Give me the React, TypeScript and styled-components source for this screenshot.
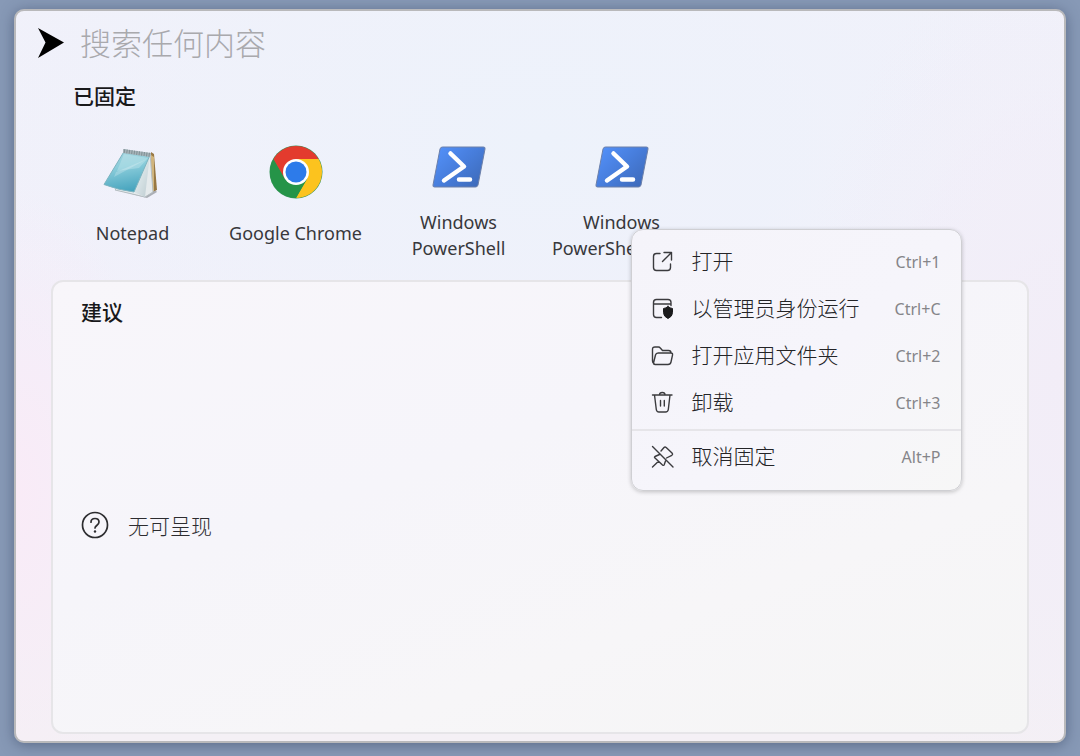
import React from "react";
import styled, { createGlobalStyle } from "styled-components";

const GlobalStyle = createGlobalStyle`
  *, *::before, *::after { box-sizing: border-box; }
  html, body { margin: 0; }
  body {
    background: #8799b6;
    color: #1f1f22;
    font-family: "Noto Sans", "Noto Sans CJK SC", sans-serif;
    font-size: 20px;
  }
  button, input { font: inherit; color: inherit; }
`;

const Desktop = styled.div`
  display: flex;
  min-height: 100vh;
  padding: 9px 14px 13px;
  background: #8799b6;
`;

const Launcher = styled.main`
  flex: 1;
  min-width: 0;
  display: flex;
  flex-direction: column;
  padding: 0 35px 7px;
  border: 2px solid #b9b9bb;
  border-radius: 10px;
  background:
    radial-gradient(ellipse 14% 42% at 0% 66%, #f9ebf7 0%, rgba(249, 235, 247, 0) 100%),
    radial-gradient(ellipse 26% 60% at 100% 50%, #f2edf7 0%, rgba(242, 237, 247, 0) 100%),
    radial-gradient(ellipse 60% 50% at 50% 18%, #edf2fb 0%, rgba(237, 242, 251, 0) 100%),
    linear-gradient(180deg, #f1f1fa 0%, #f2f0fa 50%, #f4f0f5 100%);
  box-shadow: 0 2px 14px rgba(45, 60, 90, 0.5);
`;

const SearchBar = styled.form`
  display: flex;
  align-items: center;
  gap: 15px;
  height: 64px;
  margin-left: -14px;
`;

const SearchInput = styled.input`
  flex: 1;
  min-width: 0;
  height: 48px;
  padding: 0 0 4px;
  border: 0;
  outline: 0;
  background: transparent;
  font-family: "Noto Sans CJK SC", sans-serif;
  font-size: 31px;
  font-weight: 300;
  &::placeholder { color: #a9a9ad; opacity: 1; }
`;

const Heading = styled.h2`
  margin: 0;
  font-size: 21px;
  line-height: 28px;
  font-weight: 500;
  font-family: "Noto Sans CJK SC", sans-serif;
  color: #19191b;
`;

const Pinned = styled.section`
  padding-top: 6px;
  ${Heading} { margin-left: 22px; }
`;

const AppGrid = styled.ul`
  display: grid;
  grid-template-columns: repeat(6, minmax(0, 1fr));
  height: 171px;
  margin: 0;
  padding: 0;
  list-style: none;
`;

const AppCell = styled.li`
  position: relative;
  display: flex;
`;

const AppTile = styled.button`
  flex: 1;
  display: flex;
  flex-direction: column;
  align-items: center;
  justify-content: center;
  gap: 21px;
  padding: 2px 4px 0;
  border: 0;
  background: transparent;
  font-size: 18px;
  line-height: 26px;
  color: #38383b;
  svg { display: block; flex: none; }
`;

const Menu = styled.div`
  position: absolute;
  z-index: 2;
  top: 120px;
  left: calc(50% + 9px);
  width: 331px;
  padding: 8px 0 10px;
  border: 1px solid #cfcfd3;
  border-radius: 12px;
  background: linear-gradient(135deg, #f5f4fa 0%, #f6f5fb 55%, #f7f7f7 100%);
  box-shadow: 0 1px 4px rgba(0, 0, 0, 0.22);
`;

const MenuItem = styled.button`
  display: flex;
  align-items: center;
  width: 100%;
  height: 47px;
  padding: 0 20px 0 19px;
  border: 0;
  background: transparent;
  font-size: 21px;
  font-weight: 300;
  font-family: "Noto Sans CJK SC", sans-serif;
  color: #242427;
  text-align: left;
  svg { flex: none; margin-right: 17px; }
`;

const MenuLabel = styled.span`
  padding-bottom: 3px;
`;

const Shortcut = styled.kbd`
  margin-left: auto;
  font-family: "Noto Sans", sans-serif;
  font-size: 16px;
  font-weight: 400;
  color: #858589;
`;

const Divider = styled.hr`
  height: 2px;
  margin: 3px 0 2px;
  border: 0;
  background: #e6e5e9;
`;

const Suggestions = styled.section`
  flex: 1;
  display: flex;
  flex-direction: column;
  padding: 15px 28px;
  border: 2px solid #e6e5e8;
  border-radius: 12px;
  background: linear-gradient(160deg, #f8f6fa 0%, #f6f5fa 40%, #f7f6f8 70%, #f5f5f5 100%);
`;

const Empty = styled.p`
  flex: 1;
  display: flex;
  align-items: center;
  gap: 19px;
  margin: 8px 0 0;
  font-size: 21px;
  line-height: 30px;
  font-weight: 300;
  font-family: "Noto Sans CJK SC", sans-serif;
  color: #2c2c2f;
`;

const ArrowLogo = () => (
  <svg width="28" height="32" viewBox="0 0 28 32" aria-hidden="true">
    <path d="M1 1 27 15.500 1 31 8.500 15.500Z" fill="#000" />
  </svg>
);

const NotepadIcon = () => (
  <svg width="56" height="54" viewBox="2 -2 56 54" aria-hidden="true" overflow="visible">
    <defs>
      <linearGradient id="page" x1="0.3" y1="0" x2="0.5" y2="1">
        <stop offset="0" stopColor="#a3d3de" />
        <stop offset="0.4" stopColor="#8bcddb" />
        <stop offset="1" stopColor="#45a3bd" />
      </linearGradient>
      <linearGradient id="edge" x1="0" y1="0" x2="1" y2="1">
        <stop offset="0" stopColor="#f3fafb" />
        <stop offset="1" stopColor="#bccbd0" />
      </linearGradient>
    </defs>
    <path d="M13 43 44 51 54 45 48 38Z" fill="#858b91" opacity="0.65" />
    <path d="M48 5 51 7 54 43 49 45Z" fill="#987843" />
    <path d="M48 8 51 10 51 44 48 45Z" fill="#d0b47c" />
    <path d="M47 6 50 45 42 50 12 43Z" fill="#e5eaec" stroke="#b4bdc1" strokeWidth="1" />
    <path d="M47 7 42 50 31 45Z" fill="url(#edge)" />
    <path d="M22 3 47 8 31 45Q15 43 1 37.500Z" fill="url(#page)" stroke="#7db4c0" strokeWidth="1" />
    <path d="M21 7 45 11 36 21 14 24Z" fill="#d8f0f4" opacity="0.32" />
    <path d="M44 12 13 25 11 30Z" fill="#fff" opacity="0.22" />
    <path d="M20 2 48 6 47 10 20 6Z" fill="#a6b3b8" />
    <path d="M21 4 48 8" stroke="#819196" strokeWidth="4" strokeDasharray="1 1.500" />
  </svg>
);

const ChromeIcon = () => (
  <svg width="54" height="54" viewBox="0 0 54 54" aria-hidden="true">
    <circle cx="27" cy="27" r="26.500" fill="#36955a" />
    <path d="M27 27 4.480 14A26 26 0 0 1 49.520 14Z" fill="#e33b2e" />
    <path d="M27 14H49.520A26 26 0 0 1 27 53L38.260 33.500Z" fill="#fcc31e" />
    <path d="M4.480 14A26 26 0 0 0 27 53L38.260 33.500 27 38 15.740 33.500Z" fill="#259448" />
    <path d="M4.480 14 15.740 33.500 27 27 27 14Z" fill="#e33b2e" />
    <circle cx="27" cy="27" r="13" fill="#fff" />
    <circle cx="27" cy="27" r="10.500" fill="#2d7bea" />
  </svg>
);

const PowerShellIcon = ({ id }: { id: string }) => (
  <svg width="54" height="58" viewBox="0 -16 54 58" aria-hidden="true">
    <defs>
      <linearGradient id={id} x1="0" y1="0.1" x2="1" y2="0.9">
        <stop offset="0" stopColor="#5391fa" />
        <stop offset="0.5" stopColor="#477ddb" />
        <stop offset="1" stopColor="#3d69b7" />
      </linearGradient>
    </defs>
    <path
      d="M10.500 1H51.500Q53.500 1 53 3L46 39Q45.500 41 43.500 41H2.500Q.5 41 1 39L8 3Q8.500 1 10.500 1Z"
      fill={`url(#${id})`}
      stroke="#6c80aa"
      strokeWidth="1"
    />
    <path d="M18.500 7.500 32 20.500 12 34.500M27 33.500H38" fill="none" stroke="#fff" strokeWidth="4.500" strokeLinecap="round" strokeLinejoin="round" />
  </svg>
);

const LineIcon = ({ children }: { children: React.ReactNode }) => (
  <svg width="24" height="24" viewBox="0 0 24 24" fill="none" stroke="#3b3b3e" strokeWidth="1.4" strokeLinejoin="round" strokeLinecap="round" aria-hidden="true">
    {children}
  </svg>
);

const OpenIcon = () => (
  <LineIcon>
    <path d="M9 3.500H5.500Q2.500 3.500 2.500 6.500V17.500Q2.500 20.500 5.500 20.500H16.500Q19.500 20.500 19.500 17.500V14M13 2.500H20.500V10M20.500 2.500 11.500 11.500" />
  </LineIcon>
);

const AdminIcon = () => (
  <LineIcon>
    <path d="M10.500 20.500H5.500Q2.500 20.500 2.500 17.500V5.500Q2.500 2.500 5.500 2.500H17Q20 2.500 20 5.500V8.500M2.500 7H20" />
    <path d="M17 9.500Q19 11.300 21.500 11.500V15.500Q21.500 19.500 17 21.500 12.500 19.500 12.500 15.500V11.500Q15 11.300 17 9.500Z" fill="#1b1b1d" stroke="#1b1b1d" strokeWidth="1" />
  </LineIcon>
);

const FolderIcon = () => (
  <LineIcon>
    <path d="M3 19.500Q1.500 19 1.500 17V5.500Q1.500 3 4 3H7.500Q8.500 3 9.300 4L11.500 6.500H17.500Q20 6.500 20 9M2.500 19 4.500 11Q5 9 7.200 9H19.800Q22 9 21.500 11.200L20 18Q19.500 20.500 17 20.500H4Q2.500 20.500 2.500 19Z" />
  </LineIcon>
);

const TrashIcon = () => (
  <LineIcon>
    <path d="M1.500 4H21M8.500 4Q8.500 1.500 11.300 1.500T14 4M3.500 4 5.300 18.500Q5.600 21 8 21H14.500Q17 21 17.300 18.500L19 4M9.500 9.500V15M13.300 9.500V15" />
  </LineIcon>
);

const UnpinIcon = () => (
  <LineIcon>
    <path d="M1.500 1.500 22 22M1.500 22 7.500 16.200M10 6 13 2.500Q14 1.500 15.200 2.500L21 8Q22.200 9.300 20.800 10.300L15.500 13M8.500 9.500 4 11.500Q3 12.200 4 13L11.500 20Q12.500 20.800 13.200 19.800L14.500 16" />
  </LineIcon>
);

const HelpIcon = () => (
  <svg width="28" height="28" viewBox="0 0 28 28" fill="none" stroke="#2c2c2f" strokeWidth="1.700" strokeLinecap="round" aria-hidden="true">
    <circle cx="14" cy="14" r="12.500" />
    <path d="M10 11.200Q10 7.500 14 7.500T18 11Q18 12.700 16 14.200T14 17" />
    <circle cx="14" cy="20.500" r="1.200" fill="#2c2c2f" stroke="none" />
  </svg>
);

const commands = [
  { label: "打开", keys: "Ctrl+1", Icon: OpenIcon },
  { label: "以管理员身份运行", keys: "Ctrl+C", Icon: AdminIcon },
  { label: "打开应用文件夹", keys: "Ctrl+2", Icon: FolderIcon },
  { label: "卸载", keys: "Ctrl+3", Icon: TrashIcon },
];

const ContextMenu = () => (
  <Menu role="menu">
    {commands.map(({ label, keys, Icon }) => (
      <MenuItem key={label} type="button" role="menuitem">
        <Icon />
        <MenuLabel>{label}</MenuLabel>
        <Shortcut>{keys}</Shortcut>
      </MenuItem>
    ))}
    <Divider />
    <MenuItem type="button" role="menuitem">
      <UnpinIcon />
      <MenuLabel>取消固定</MenuLabel>
      <Shortcut>Alt+P</Shortcut>
    </MenuItem>
  </Menu>
);

export default function App() {
  return (
    <>
      <GlobalStyle />
      <Desktop>
        <Launcher>
          <SearchBar role="search" onSubmit={(e) => e.preventDefault()}>
            <ArrowLogo />
            <SearchInput type="text" aria-label="搜索任何内容" placeholder="搜索任何内容" />
          </SearchBar>
          <Pinned>
            <Heading>已固定</Heading>
            <AppGrid>
              <AppCell>
                <AppTile type="button">
                  <NotepadIcon />
                  <span>Notepad</span>
                </AppTile>
              </AppCell>
              <AppCell>
                <AppTile type="button">
                  <ChromeIcon />
                  <span>Google Chrome</span>
                </AppTile>
              </AppCell>
              <AppCell>
                <AppTile type="button">
                  <PowerShellIcon id="shell-a" />
                  <span>Windows PowerShell</span>
                </AppTile>
              </AppCell>
              <AppCell>
                <AppTile type="button">
                  <PowerShellIcon id="shell-b" />
                  <span>Windows PowerShell (x86)</span>
                </AppTile>
                <ContextMenu />
              </AppCell>
            </AppGrid>
          </Pinned>
          <Suggestions>
            <Heading>建议</Heading>
            <Empty>
              <HelpIcon />
              无可呈现
            </Empty>
          </Suggestions>
        </Launcher>
      </Desktop>
    </>
  );
}
